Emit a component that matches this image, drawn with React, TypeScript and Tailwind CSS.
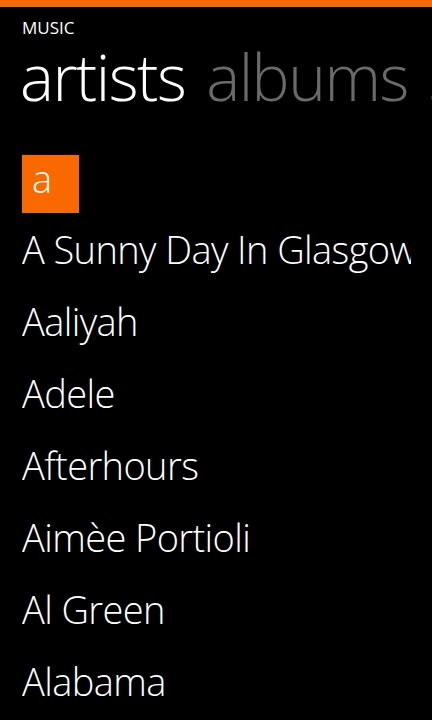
import React from "react";

const artists = [
  "A Sunny Day In Glasgow",
  "Aaliyah",
  "Adele",
  "Afterhours",
  "Aimèe Portioli",
  "Al Green",
  "Alabama",
];

export default function App() {
  return (
    <div
      className="w-[432px] h-[720px] bg-black overflow-hidden flex flex-col text-white"
      style={{ fontFamily: '"Open Sans", "Noto Sans", sans-serif' }}
    >
      <div className="h-[7px] w-full bg-[#fa6800] shrink-0" />
      <div className="pl-[22px] mt-[11px] text-[17px] leading-[20px] font-normal">
        MUSIC
      </div>
      <div className="mt-[7px] flex whitespace-nowrap pl-[20px] gap-[21px] text-[64px] leading-[64px] font-light tracking-[-1.5px]">
        <span className="text-white">artists</span>
        <span className="text-[#6a6a6a]">albums</span>
        <span className="text-[#6a6a6a]">songs</span>
      </div>
      <div className="mt-[46px] pl-[22px]">
        <div className="w-[57px] h-[58px] bg-[#fa6800] pl-[10px] text-[38px] leading-[46px] font-light">
          a
        </div>
      </div>
      <div className="pl-[22px] pr-[21px] flex flex-col">
        {artists.map((a) => (
          <div
            key={a}
            className="h-[72px] text-[38px] leading-[72px] font-light whitespace-nowrap overflow-hidden tracking-[-0.6px]"
          >
            {a}
          </div>
        ))}
      </div>
    </div>
  );
}
